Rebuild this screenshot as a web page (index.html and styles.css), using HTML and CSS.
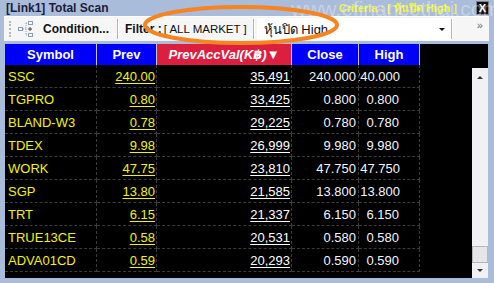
FILE: index.html
```html
<!DOCTYPE html>
<html>
<head>
<meta charset="utf-8">
<title>Total Scan</title>
<link rel="stylesheet" href="styles.css">
</head>
<body>
<div class="win">
  <div class="titlebar">
    <span class="tit">[Link1] Total Scan</span>
    <span class="criteria">Criteria : [ หุ้นปิด High ]</span>
    <span class="close">X</span>
  </div>
  <div class="toolbar">
    <span class="grip"></span>
    <svg class="ico" width="16" height="16" viewBox="0 0 16 16">
      <rect x="0.5" y="6.5" width="4" height="3" fill="#fff" stroke="#8a9ab8"/>
      <rect x="10.5" y="0.5" width="4" height="3" fill="#fff" stroke="#8a9ab8"/>
      <rect x="10.5" y="12.5" width="4" height="3" fill="#fff" stroke="#8a9ab8"/>
      <path d="M5 8h3M8 2v12M8 2h2M8 14h2" stroke="#8a9ab8" stroke-dasharray="1 1" fill="none"/>
      <path d="M12 6v4M10 8h4" stroke="#444" fill="none"/>
    </svg>
    <span class="btn">Condition...</span>
    <span class="sep"></span>
    <span class="lbl">Filter :</span>
    <span class="market">[ ALL MARKET ]</span>
    <span class="sep"></span>
    <span class="combo">หุ้นปิด High<span class="arrow"></span></span>
    <span class="sep"></span>
    <span class="more">»</span>
  </div>
  <div class="grid">
    <table class="scan">
      <colgroup>
        <col class="c1"><col class="c2"><col class="c3"><col class="c4"><col class="c5">
      </colgroup>
      <thead>
        <tr>
          <th>Symbol</th>
          <th>Prev</th>
          <th class="sorted">PrevAccVal(K฿)▼</th>
          <th>Close</th>
          <th>High</th>
        </tr>
      </thead>
      <tbody>
        <tr><td class="sym">SSC</td><td class="prev"><u>240.00</u></td><td class="acc"><u>35,491</u></td><td class="num">240.000</td><td class="num hi">240.000</td></tr>
        <tr><td class="sym">TGPRO</td><td class="prev"><u>0.80</u></td><td class="acc"><u>33,425</u></td><td class="num">0.800</td><td class="num hi">0.800</td></tr>
        <tr><td class="sym">BLAND-W3</td><td class="prev"><u>0.78</u></td><td class="acc"><u>29,225</u></td><td class="num">0.780</td><td class="num hi">0.780</td></tr>
        <tr><td class="sym">TDEX</td><td class="prev"><u>9.98</u></td><td class="acc"><u>26,999</u></td><td class="num">9.980</td><td class="num hi">9.980</td></tr>
        <tr><td class="sym">WORK</td><td class="prev"><u>47.75</u></td><td class="acc"><u>23,810</u></td><td class="num">47.750</td><td class="num hi">47.750</td></tr>
        <tr><td class="sym">SGP</td><td class="prev"><u>13.80</u></td><td class="acc"><u>21,585</u></td><td class="num">13.800</td><td class="num hi">13.800</td></tr>
        <tr><td class="sym">TRT</td><td class="prev"><u>6.15</u></td><td class="acc"><u>21,337</u></td><td class="num">6.150</td><td class="num hi">6.150</td></tr>
        <tr><td class="sym">TRUE13CE</td><td class="prev"><u>0.58</u></td><td class="acc"><u>20,531</u></td><td class="num">0.580</td><td class="num hi">0.580</td></tr>
        <tr><td class="sym">ADVA01CD</td><td class="prev"><u>0.59</u></td><td class="acc"><u>20,293</u></td><td class="num">0.590</td><td class="num hi">0.590</td></tr>
      </tbody>
    </table>
    <div class="vscroll">
      <span class="up"></span>
      <span class="thumb"></span>
      <span class="down"></span>
    </div>
  </div>
  <div class="watermark">www.efinancethai.com</div>
  <svg class="mark" width="494" height="60" viewBox="0 0 494 60">
    <ellipse cx="241" cy="25" rx="96" ry="18" fill="none" stroke="#f7841f" stroke-width="4"/>
  </svg>
</div>
</body>
</html>
```

FILE: styles.css
```css
body {margin:0;font:normal 12px "Liberation Sans", "DejaVu Sans", sans-serif;background:#a9bcd9;}
.win {position:relative;width:494px;height:283px;overflow:hidden;background:#a9bcd9;}

.titlebar {display:flex;align-items:center;height:16px;padding-left:6px;}
.tit {font-weight:bold;font-size:12px;color:#1b1d3c;}
.criteria {margin-left:auto;margin-right:19px;font-weight:bold;font-size:11px;color:#f2f23c;}
.close {width:11px;height:12px;margin-right:5px;line-height:12px;text-align:center;font-weight:bold;font-size:11px;color:#fff;background:#101010;border:1px solid #808080;}

.toolbar {display:flex;align-items:center;height:24px;margin:0 5px 0 4px;border-top:1px solid #fff;background:#f6f6f6;white-space:nowrap;}
.toolbar > * {flex-shrink:0;}
.grip {width:2px;height:16px;margin-left:5px;border-left:2px dotted #b8b8b8;}
.ico {margin-left:5px;}
.btn {margin-left:9px;font-weight:bold;font-size:12px;color:#111;}
.sep {width:1px;height:20px;background:#b4b4b4;border-right:1px solid #fff;}
.toolbar .btn + .sep {margin-left:8px;}
.lbl {margin-left:6px;font-weight:bold;font-size:12px;color:#111;}
.market {margin-left:2px;font-size:11.5px;color:#111;}
.market + .sep {margin-left:6px;}
.combo {display:flex;align-items:center;width:187px;height:22px;margin-left:2px;padding-left:7px;font-size:13px;color:#111;background:#fff;}
.arrow {margin-left:auto;margin-right:6px;width:0;height:0;border-left:3px solid transparent;border-right:3px solid transparent;border-top:3px solid #111;}
.more {margin-left:24px;font-size:11px;line-height:10px;color:#5a6a90;margin-top:-8px;}

.grid {display:flex;height:234px;margin:3px 6px 0 5px;background:#000;}
.scan {table-layout:fixed;border-collapse:separate;border-spacing:0;width:415px;height:228px;font-size:13px;}
.c1 {width:92px;}
.c2 {width:60px;}
.c3 {width:135px;}
.c4 {width:67px;}
.c5 {width:61px;}
.scan th {height:21px;padding:0;font-weight:bold;font-size:13px;color:#fff;background:#0000f8;border-right:1px solid #c4c4c4;}
.scan th.sorted {font-style:italic;background:#dc1f3f;}
.scan td {height:22px;padding:0 2px;overflow:hidden;white-space:nowrap;border-right:1px dashed #3c3c3c;border-bottom:1px dashed #3c3c3c;}
.scan .sym {padding-left:3px;color:#f4f400;}
.scan .prev {text-align:right;padding-right:1px;color:#f4f400;}
.scan .acc {text-align:right;padding-right:1px;color:#fff;}
.scan .num {text-align:right;color:#f2f6ff;}
.scan .hi {padding-right:20px;text-overflow:clip;direction:rtl;}
.scan u {text-underline-offset:2px;}

.vscroll {position:relative;width:16px;height:210px;margin:24px 0 0 auto;background:#f1f1f4;}
.up, .down {position:absolute;left:5px;width:0;height:0;border-left:3px solid transparent;border-right:3px solid transparent;}
.up {top:8px;border-bottom:3px solid #333;}
.down {bottom:6px;border-top:3px solid #333;}
.thumb {position:absolute;left:0;top:178px;width:14px;height:15px;border:1px solid #b8b8b8;background:#e6e6ea;}

.watermark {position:absolute;left:291px;top:-3px;font-size:21px;color:rgba(255,255,255,0.35);pointer-events:none;}
.mark {position:absolute;left:0;top:0;pointer-events:none;}
```
